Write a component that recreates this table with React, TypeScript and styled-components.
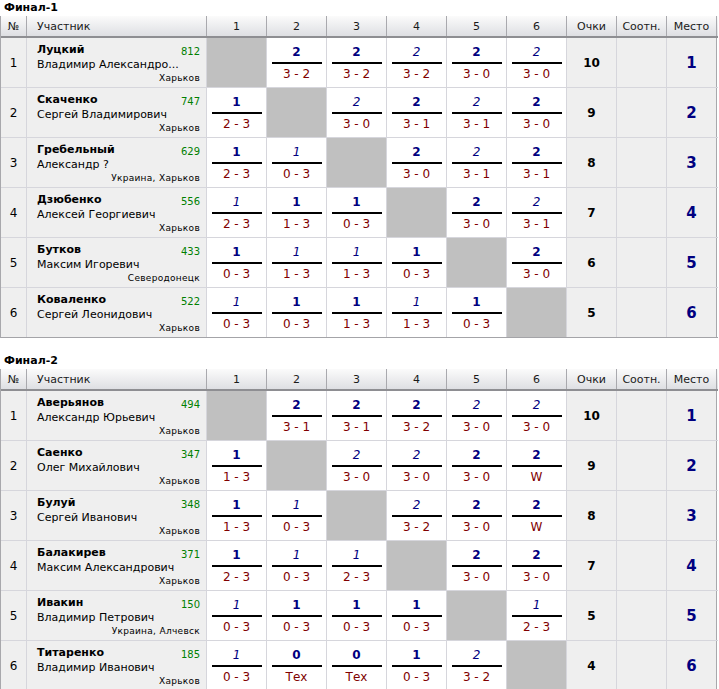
import React from "react";
import styled, { createGlobalStyle } from "styled-components";

const GlobalStyle = createGlobalStyle`
  html, body { margin: 0; padding: 0; background: #ffffff; }
  body { font-family: "DejaVu Sans", Verdana, sans-serif; color: #000; }
  * { box-sizing: border-box; }
`;

const COLS = "26px 180px repeat(6, 60px) repeat(3, 50px)";

const Page = styled.div`
  display: flex;
  flex-direction: column;
  gap: 15px;
  width: 719px;
`;

const Section = styled.section`
  display: flex;
  flex-direction: column;
`;

const Title = styled.div`
  height: 16px;
  line-height: 16px;
  padding-left: 4px;
  font-size: 11px;
  font-weight: bold;
`;

const Table = styled.div`
  display: flex;
  flex-direction: column;
  width: 718px;
  border-left: 1px solid #a8a8ac;
`;

const HeadRow = styled.div`
  display: grid;
  grid-template-columns: ${COLS};
  height: 22px;
  background: linear-gradient(#fbfbfb, #dedfe3);
  border-bottom: 2px solid #8e8e92;
`;

const HeadCell = styled.div<{ $left?: boolean }>`
  display: flex;
  align-items: center;
  justify-content: ${(p) => (p.$left ? "flex-start" : "center")};
  padding-left: ${(p) => (p.$left ? "10px" : "0")};
  border-right: 1px solid #a9a9ae;
  font-size: 11px;
  color: #1a1a1a;
`;

const Row = styled.div`
  display: grid;
  grid-template-columns: ${COLS};
  height: 50px;
  border-bottom: 1px solid #d6d6dc;
  &:last-child {
    border-bottom-color: #a4a4a8;
  }
`;

const Cell = styled.div`
  border-right: 1px solid #d6d6dc;
`;

const NumCell = styled(Cell)`
  display: flex;
  align-items: center;
  justify-content: center;
  background: #efefef;
  font-size: 12px;
`;

const NameCell = styled(Cell)`
  display: flex;
  flex-direction: column;
  background: #efefef;
  padding: 5px 6px 0 10px;
`;

const TopLine = styled.div`
  display: flex;
  justify-content: space-between;
  align-items: flex-end;
`;

const Surname = styled.span`
  font-size: 11px;
  line-height: 14px;
  font-weight: bold;
`;

const Rating = styled.span`
  font-size: 10px;
  line-height: 10px;
  color: #008000;
`;

const FirstName = styled.div`
  font-size: 11px;
  line-height: 16px;
  white-space: nowrap;
`;

const City = styled.div`
  font-size: 9px;
  line-height: 10px;
  letter-spacing: 0.3px;
  text-align: right;
`;

const EmptyCell = styled(Cell)`
  background: #c0c0c0;
`;

const GameCell = styled(Cell)`
  display: flex;
  flex-direction: column;
  align-items: center;
  justify-content: center;
  background: #ffffff;
`;

const GamePoints = styled.div<{ $bold: boolean }>`
  font-size: 12px;
  line-height: 14px;
  color: #000080;
  font-weight: ${(p) => (p.$bold ? "bold" : "normal")};
  font-style: ${(p) => (p.$bold ? "normal" : "italic")};
`;

const Bar = styled.div`
  width: 50px;
  height: 2px;
  margin: 3px 0;
  background: #000;
`;

const GameScore = styled.div`
  font-size: 12px;
  line-height: 14px;
  color: #800000;
`;

const StatCell = styled(Cell)<{ $place?: boolean }>`
  display: flex;
  align-items: center;
  justify-content: center;
  background: #efefef;
  font-weight: bold;
  font-size: ${(p) => (p.$place ? "15px" : "12px")};
  color: ${(p) => (p.$place ? "#000080" : "#000")};
  &:last-child {
    border-right: 1px solid #a8a8ac;
  }
`;

type Player = {
  surname: string;
  name: string;
  rating: string;
  city: string;
  games: string[];
  points: string;
  place: string;
};

const p = (
  surname: string,
  name: string,
  rating: string,
  city: string,
  games: string[],
  points: string,
  place: string
): Player => ({ surname, name, rating, city, games, points, place });

const final1: Player[] = [
  p("Луцкий", "Владимир Александро...", "812", "Харьков", ["x", "b2:3 - 2", "b2:3 - 2", "i2:3 - 2", "b2:3 - 0", "i2:3 - 0"], "10", "1"),
  p("Скаченко", "Сергей Владимирович", "747", "Харьков", ["b1:2 - 3", "x", "i2:3 - 0", "b2:3 - 1", "i2:3 - 1", "b2:3 - 0"], "9", "2"),
  p("Гребельный", "Александр ?", "629", "Украина, Харьков", ["b1:2 - 3", "i1:0 - 3", "x", "b2:3 - 0", "i2:3 - 1", "b2:3 - 1"], "8", "3"),
  p("Дзюбенко", "Алексей Георгиевич", "556", "Харьков", ["i1:2 - 3", "b1:1 - 3", "b1:0 - 3", "x", "b2:3 - 0", "i2:3 - 1"], "7", "4"),
  p("Бутков", "Максим Игоревич", "433", "Северодонецк", ["b1:0 - 3", "i1:1 - 3", "i1:1 - 3", "b1:0 - 3", "x", "b2:3 - 0"], "6", "5"),
  p("Коваленко", "Сергей Леонидович", "522", "Харьков", ["i1:0 - 3", "b1:0 - 3", "b1:1 - 3", "i1:1 - 3", "b1:0 - 3", "x"], "5", "6"),
];

const final2: Player[] = [
  p("Аверьянов", "Александр Юрьевич", "494", "Харьков", ["x", "b2:3 - 1", "b2:3 - 1", "b2:3 - 2", "i2:3 - 0", "i2:3 - 0"], "10", "1"),
  p("Саенко", "Олег Михайлович", "347", "Харьков", ["b1:1 - 3", "x", "i2:3 - 0", "i2:3 - 0", "b2:3 - 0", "b2:W"], "9", "2"),
  p("Булуй", "Сергей Иванович", "348", "Харьков", ["b1:1 - 3", "i1:0 - 3", "x", "i2:3 - 2", "b2:3 - 0", "b2:W"], "8", "3"),
  p("Балакирев", "Максим Александрович", "371", "Харьков", ["b1:2 - 3", "i1:0 - 3", "i1:2 - 3", "x", "b2:3 - 0", "b2:3 - 0"], "7", "4"),
  p("Ивакин", "Владимир Петрович", "150", "Украина, Алчевск", ["i1:0 - 3", "b1:0 - 3", "b1:0 - 3", "b1:0 - 3", "x", "i1:2 - 3"], "5", "5"),
  p("Титаренко", "Владимир Иванович", "185", "Харьков", ["i1:0 - 3", "b0:Тех", "b0:Тех", "b1:0 - 3", "i2:3 - 2", "x"], "4", "6"),
];

const Game: React.FC<{ code: string }> = ({ code }) => {
  if (code === "x") return <EmptyCell />;
  const bold = code[0] === "b";
  const [pts, score] = code.slice(1).split(":");
  return (
    <GameCell>
      <GamePoints $bold={bold}>{pts}</GamePoints>
      <Bar />
      <GameScore>{score}</GameScore>
    </GameCell>
  );
};

const Standings: React.FC<{ title: string; players: Player[] }> = ({ title, players }) => (
  <Section>
    <Title>{title}</Title>
    <Table>
      <HeadRow>
        <HeadCell>№</HeadCell>
        <HeadCell $left>Участник</HeadCell>
        {[1, 2, 3, 4, 5, 6].map((n) => (
          <HeadCell key={n}>{n}</HeadCell>
        ))}
        <HeadCell>Очки</HeadCell>
        <HeadCell>Соотн.</HeadCell>
        <HeadCell>Место</HeadCell>
      </HeadRow>
      {players.map((pl, i) => (
        <Row key={pl.surname}>
          <NumCell>{i + 1}</NumCell>
          <NameCell>
            <TopLine>
              <Surname>{pl.surname}</Surname>
              <Rating>{pl.rating}</Rating>
            </TopLine>
            <FirstName>{pl.name}</FirstName>
            <City>{pl.city}</City>
          </NameCell>
          {pl.games.map((g, j) => (
            <Game key={j} code={g} />
          ))}
          <StatCell>{pl.points}</StatCell>
          <StatCell />
          <StatCell $place>{pl.place}</StatCell>
        </Row>
      ))}
    </Table>
  </Section>
);

export default function App() {
  return (
    <>
      <GlobalStyle />
      <Page>
        <Standings title="Финал-1" players={final1} />
        <Standings title="Финал-2" players={final2} />
      </Page>
    </>
  );
}
